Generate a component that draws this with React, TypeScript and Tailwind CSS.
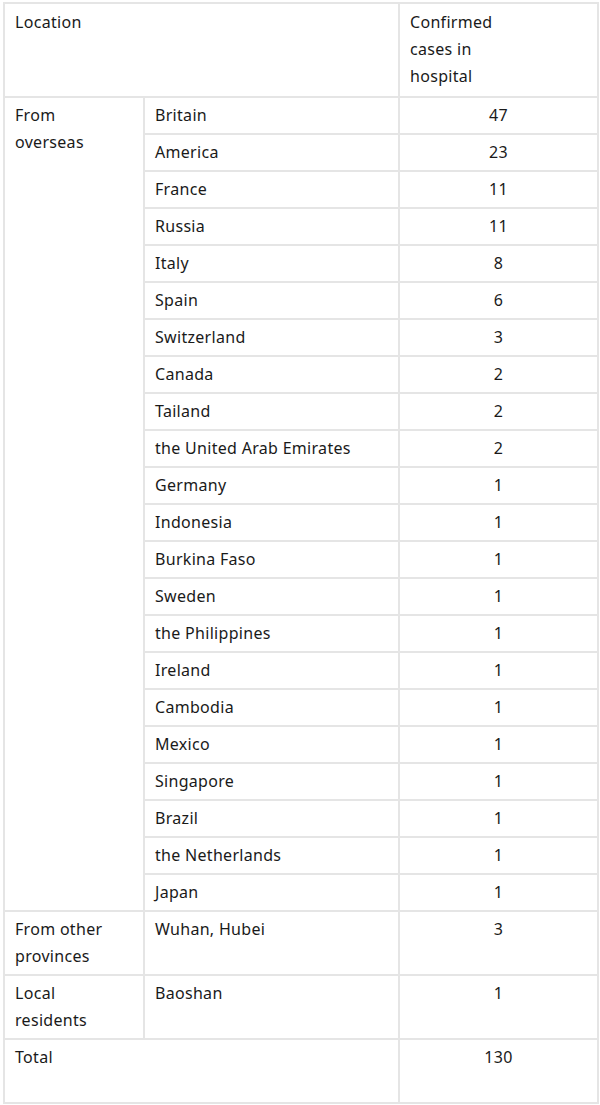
const overseas: [string, number][] = [
  ["Britain", 47],
  ["America", 23],
  ["France", 11],
  ["Russia", 11],
  ["Italy", 8],
  ["Spain", 6],
  ["Switzerland", 3],
  ["Canada", 2],
  ["Tailand", 2],
  ["the United Arab Emirates", 2],
  ["Germany", 1],
  ["Indonesia", 1],
  ["Burkina Faso", 1],
  ["Sweden", 1],
  ["the Philippines", 1],
  ["Ireland", 1],
  ["Cambodia", 1],
  ["Mexico", 1],
  ["Singapore", 1],
  ["Brazil", 1],
  ["the Netherlands", 1],
  ["Japan", 1],
];

const cell = "border-2 border-[#e5e5e5] px-[10px] py-[4px] align-top";

export default function App() {
  return (
    <div className="bg-white pl-[3px] pt-[2px] text-[#1a1a1a] text-[16px] tracking-[0.3px] leading-[27px] [font-family:'Noto_Sans',sans-serif]">
      <table className="w-[594px] table-fixed border-collapse">
        <colgroup>
          <col className="w-[140px]" />
          <col className="w-[255px]" />
          <col className="w-[199px]" />
        </colgroup>
        <tbody>
          <tr>
            <td colSpan={2} className={`${cell} pt-[5px] pb-[6px]`}>
              Location
            </td>
            <td className={`${cell} pt-[5px] pb-[6px]`}>
              Confirmed
              <br />
              cases in
              <br />
              hospital
            </td>
          </tr>
          {overseas.map(([place, n], i) => (
            <tr key={place}>
              {i === 0 && (
                <td rowSpan={overseas.length} className={cell}>
                  From
                  <br />
                  overseas
                </td>
              )}
              <td className={cell}>{place}</td>
              <td className={`${cell} text-center`}>{n}</td>
            </tr>
          ))}
          <tr>
            <td className={cell}>
              From other
              <br />
              provinces
            </td>
            <td className={cell}>Wuhan, Hubei</td>
            <td className={`${cell} text-center`}>3</td>
          </tr>
          <tr>
            <td className={cell}>
              Local
              <br />
              residents
            </td>
            <td className={cell}>Baoshan</td>
            <td className={`${cell} text-center`}>1</td>
          </tr>
          <tr>
            <td colSpan={2} className={cell}>
              Total
              <br />
              &nbsp;
            </td>
            <td className={`${cell} text-center`}>130</td>
          </tr>
        </tbody>
      </table>
    </div>
  );
}
